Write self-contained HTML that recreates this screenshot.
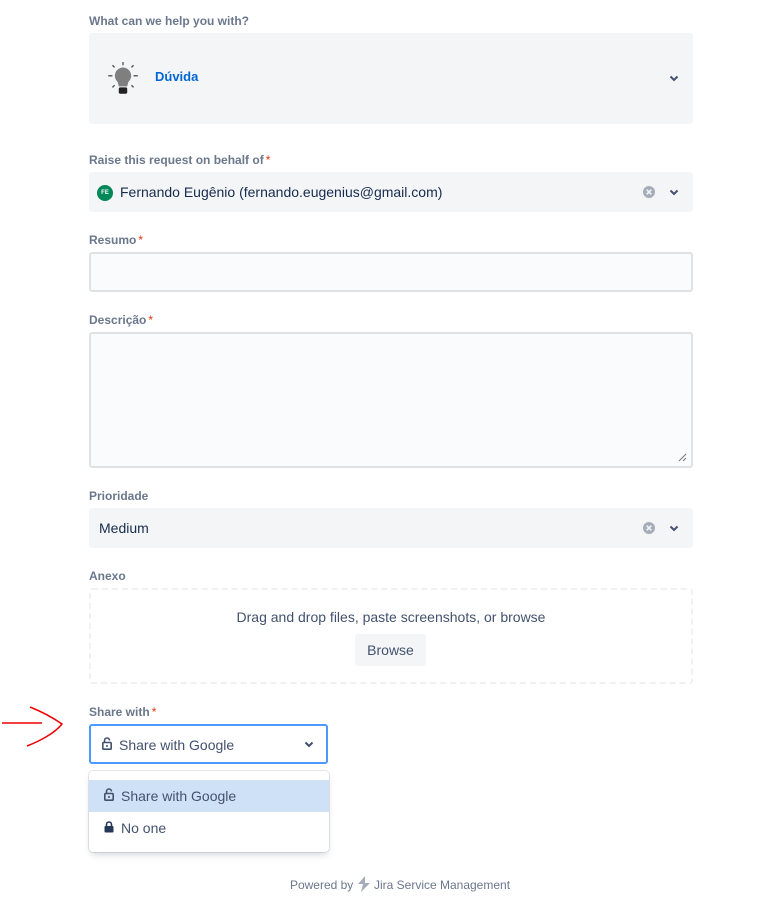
<!DOCTYPE html>
<html><head><meta charset="utf-8">
<style>
*{box-sizing:border-box;margin:0;padding:0}
body{width:776px;height:909px;background:#fff;font-family:"Liberation Sans",sans-serif;color:#172b4d;position:relative;overflow:hidden}
.a{position:absolute}
.lbl{position:absolute;left:89px;font-size:12px;font-weight:bold;color:#6b778c}
.lbl i{color:#de350b;font-style:normal;font-weight:normal;margin-left:2px}
.sel{position:absolute;left:89px;width:604px;height:40px;background:#f4f5f7;border-radius:3px;font-size:14px}
.inp{position:absolute;left:89px;width:604px;background:#fafbfc;border:2px solid #dfe1e6;border-radius:3px}
.chev{position:absolute;right:14px;top:17px}
.clr{position:absolute;right:37px;top:13px}
</style></head><body>
<div class="lbl" style="top:14px">What can we help you with?</div>
<div class="sel" style="top:33px;height:91px">
 <svg class="a" style="left:17px;top:28px" width="34" height="38" viewBox="0 0 32 36">
  <g stroke="#555" stroke-width="1.3"><line x1="2" y1="14" x2="6" y2="14"/><line x1="26" y1="14" x2="30" y2="14"/><line x1="16" y1="1" x2="16" y2="4"/><line x1="6" y1="4" x2="8" y2="6"/><line x1="26" y1="4" x2="24" y2="6"/><line x1="6" y1="25" x2="8" y2="23"/><line x1="26" y1="25" x2="24" y2="23"/></g>
  <path d="M16 6a8 8 0 0 0-5 14l1 4h8l1-4a8 8 0 0 0-5-14z" fill="#7f7f7f"/>
  <rect x="12" y="25" width="8" height="6" rx="1.5" fill="#222"/>
 </svg>
 <div class="a" style="left:66px;top:36px;color:#0065d6;font-weight:bold;font-size:13px">Dúvida</div>
 <svg class="a" style="right:14px;top:42px" width="10" height="7" viewBox="0 0 10 7"><path d="M1.5 1.5L5 5l3.5-3.5" stroke="#42526e" stroke-width="2" fill="none"/></svg>
</div>

<div class="lbl" style="top:153px">Raise this request on behalf of<i>*</i></div>
<div class="sel" style="top:172px">
 <div class="a" style="left:8px;top:13px;width:16px;height:16px;border-radius:50%;background:#00875a;color:#fff;font-size:6px;font-weight:bold;text-align:center;line-height:16px">FE</div>
 <div class="a" style="left:31px;top:12px">Fernando Eugênio (fernando.eugenius@gmail.com)</div>
 <svg class="clr" width="14" height="14" viewBox="0 0 14 14"><circle cx="7" cy="7" r="6" fill="#a5adba"/><path d="M4.7 4.7l4.6 4.6M9.3 4.7l-4.6 4.6" stroke="#f4f5f7" stroke-width="1.6"/></svg>
 <svg class="chev" width="10" height="7" viewBox="0 0 10 7"><path d="M1.5 1.5L5 5l3.5-3.5" stroke="#42526e" stroke-width="2" fill="none"/></svg>
</div>

<div class="lbl" style="top:233px">Resumo<i>*</i></div>
<div class="inp" style="top:252px;height:40px"></div>

<div class="lbl" style="top:313px">Descrição<i>*</i></div>
<div class="inp" style="top:332px;height:136px">
 <svg class="a" style="right:4px;bottom:4px" width="9" height="9"><path d="M8 1L1 8M8 5L5 8" stroke="#777" stroke-width="1"/></svg>
</div>

<div class="lbl" style="top:489px">Prioridade</div>
<div class="sel" style="top:508px">
 <div class="a" style="left:10px;top:12px">Medium</div>
 <svg class="clr" width="14" height="14" viewBox="0 0 14 14"><circle cx="7" cy="7" r="6" fill="#a5adba"/><path d="M4.7 4.7l4.6 4.6M9.3 4.7l-4.6 4.6" stroke="#f4f5f7" stroke-width="1.6"/></svg>
 <svg class="chev" width="10" height="7" viewBox="0 0 10 7"><path d="M1.5 1.5L5 5l3.5-3.5" stroke="#42526e" stroke-width="2" fill="none"/></svg>
</div>

<div class="lbl" style="top:569px">Anexo</div>
<div class="a" style="left:89px;top:588px;width:604px;height:96px;border:2px dashed #f0f1f3;border-radius:3px">
 <div class="a" style="left:0;right:0;top:19px;text-align:center;font-size:14px;color:#42526e">Drag and drop files, paste screenshots, or browse</div>
 <div class="a" style="left:264px;top:44px;width:71px;height:32px;background:#f4f5f7;border-radius:3px;text-align:center;line-height:32px;font-size:14px;color:#42526e">Browse</div>
</div>

<svg class="a" style="left:0;top:703px" width="70" height="45"><path d="M2 20H42M30 4C40 8 52 14 62 21C55 30 40 38 27 43" stroke="#e00" stroke-width="1.5" fill="none"/></svg>

<div class="lbl" style="top:705px">Share with<i>*</i></div>
<div class="a" style="left:89px;top:724px;width:239px;height:40px;border:2px solid #4c9aff;border-radius:3px;background:#fff;font-size:14px;color:#42526e">
 <svg class="a" style="left:11px;top:11px" width="10" height="13" viewBox="0 0 10 13"><path d="M2.5 5.5V3.5a2.5 2.5 0 0 1 5 0" stroke="#42526e" stroke-width="1.6" fill="none"/><rect x="0.8" y="5.5" width="8.4" height="6.7" rx="1" stroke="#42526e" stroke-width="1.6" fill="none"/><circle cx="5" cy="9" r="1" fill="#42526e"/></svg>
 <div class="a" style="left:28px;top:11px">Share with Google</div>
 <svg class="a" style="right:12px;top:15px" width="10" height="7" viewBox="0 0 10 7"><path d="M1.5 1.5L5 5l3.5-3.5" stroke="#42526e" stroke-width="2" fill="none"/></svg>
</div>

<div class="a" style="left:89px;top:771px;width:240px;height:81px;background:#fff;border-radius:4px;box-shadow:0 0 0 1px rgba(9,30,66,.1),0 4px 8px -2px rgba(9,30,66,.2);font-size:14px;color:#42526e">
 <div class="a" style="left:0;top:9px;width:240px;height:32px;background:#cfe1f7"></div>
 <svg class="a" style="left:15px;top:17px" width="10" height="13" viewBox="0 0 10 13"><path d="M2.5 5.5V3.5a2.5 2.5 0 0 1 5 0" stroke="#42526e" stroke-width="1.6" fill="none"/><rect x="0.8" y="5.5" width="8.4" height="6.7" rx="1" stroke="#42526e" stroke-width="1.6" fill="none"/><circle cx="5" cy="9" r="1" fill="#42526e"/></svg>
 <div class="a" style="left:32px;top:17px">Share with Google</div>
 <svg class="a" style="left:15px;top:50px" width="10" height="12" viewBox="0 0 10 12"><path d="M2.5 5V3.5a2.5 2.5 0 0 1 5 0V5" stroke="#253858" stroke-width="1.6" fill="none"/><rect x="0.5" y="5" width="9" height="6.5" rx="1" fill="#253858"/></svg>
 <div class="a" style="left:32px;top:49px">No one</div>
</div>

<div class="a" style="left:0;width:800px;top:876px;text-align:center;font-size:12px;color:#6b778c">Powered by <svg width="14" height="16" viewBox="0 0 14 16" style="vertical-align:-3px"><path d="M8 0L1 8h5l-2 8 9-9H8z" fill="#a5adba"/></svg> Jira Service Management</div>
</body></html>
